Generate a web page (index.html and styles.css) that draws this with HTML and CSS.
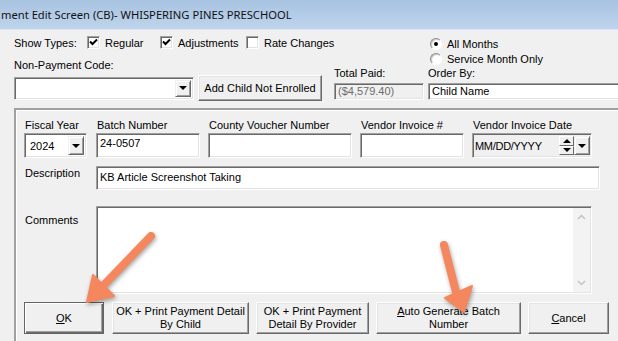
FILE: index.html
```html
<!DOCTYPE html>
<html lang="en">

<head>
    <meta charset="UTF-8">
    <title>Payment Edit Screen</title>
    <link rel="stylesheet" href="styles.css">
</head>

<body>
    <div class="titlebar">ment Edit Screen (CB)- WHISPERING PINES PRESCHOOL</div>

    <div class="top">
        <div class="left">
            <div class="types">
                <span class="types-lbl">Show Types:</span>
                <span class="chk c1"><span class="box"><svg width="9" height="9" viewBox="0 0 9 9"><path d="M1 3.5 L3.5 6 L8 1.5" stroke="#000" stroke-width="2" fill="none"/></svg></span>Regular</span>
                <span class="chk c2"><span class="box"><svg width="9" height="9" viewBox="0 0 9 9"><path d="M1 3.5 L3.5 6 L8 1.5" stroke="#000" stroke-width="2" fill="none"/></svg></span>Adjustments</span>
                <span class="chk"><span class="box"></span>Rate Changes</span>
            </div>
            <div class="lbl np">Non-Payment Code:</div>
            <div class="combo-row">
                <div class="sunken combo np-combo"><span class="drop"><i class="tri"></i></span></div>
                <div class="btn add"><span>Add Child Not Enrolled</span></div>
            </div>
        </div>
        <div class="total">
            <div class="lbl">Total Paid:</div>
            <div class="sunken field disabled">($4,579.40)</div>
        </div>
        <div class="order">
            <div class="radio-row"><span class="radio on"><i></i></span>All Months</div>
            <div class="radio-row"><span class="radio"></span>Service Month Only</div>
            <div class="lbl">Order By:</div>
            <div class="sunken field">Child Name</div>
        </div>
    </div>

    <div class="group">
        <div class="fields">
            <div class="col">
                <div class="lbl">Fiscal Year</div>
                <div class="sunken combo fy">2024<span class="drop"><i class="tri"></i></span></div>
            </div>
            <div class="col">
                <div class="lbl">Batch Number</div>
                <div class="sunken box-in batch">24-0507</div>
            </div>
            <div class="col">
                <div class="lbl">County Voucher Number</div>
                <div class="sunken box-in county"></div>
            </div>
            <div class="col">
                <div class="lbl">Vendor Invoice #</div>
                <div class="sunken box-in vendor"></div>
            </div>
            <div class="col">
                <div class="lbl">Vendor Invoice Date</div>
                <div class="sunken date">
                    <span class="date-txt">MM/DD/YYYY</span>
                    <span class="spin">
                        <span class="spin-btn"><i class="tri up"></i></span>
                        <span class="spin-btn"><i class="tri"></i></span>
                    </span>
                    <span class="drop"><i class="tri"></i></span>
                </div>
            </div>
        </div>

        <div class="line desc-line">
            <div class="side-lbl">Description</div>
            <div class="sunken box-in desc">KB Article Screenshot Taking</div>
        </div>

        <div class="line comm-line">
            <div class="side-lbl comm-lbl">Comments</div>
            <div class="sunken comments">
                <div class="scroll">
                    <svg width="9" height="6" viewBox="0 0 9 6"><path d="M1 5 L4.5 1.5 L8 5" stroke="#c4c4c4" stroke-width="1.5" fill="none"/></svg>
                    <svg width="9" height="6" viewBox="0 0 9 6"><path d="M1 1 L4.5 4.5 L8 1" stroke="#c4c4c4" stroke-width="1.5" fill="none"/></svg>
                </div>
            </div>
        </div>

        <div class="buttons">
            <div class="btn default ok"><span><u>O</u>K</span></div>
            <div class="btn b2"><span>OK + Print Payment Detail<br>By Child</span></div>
            <div class="btn b3"><span>OK + Print Payment<br>Detail By Provider</span></div>
            <div class="btn b4"><span><u>A</u>uto Generate Batch<br>Number</span></div>
            <div class="btn cancel"><span><u>C</u>ancel</span></div>
        </div>
    </div>

    <svg class="arrows" width="618" height="341" viewBox="0 0 618 341">
        <g fill="#f4875e" stroke="#f4875e">
            <line x1="151" y1="236" x2="101" y2="288" stroke-width="8" stroke-linecap="round"/>
            <polygon points="87,302 93,275 114,296" stroke-width="2" stroke-linejoin="round"/>
            <line x1="444" y1="245" x2="456" y2="292" stroke-width="8" stroke-linecap="round"/>
            <polygon points="464,312 445,298 472,286" stroke-width="2" stroke-linejoin="round"/>
        </g>
    </svg>
</body>

</html>
```

FILE: styles.css
```css
* {
    margin: 0;
    padding: 0;
    box-sizing: border-box;
}

body {
    width: 618px;
    height: 341px;
    overflow: hidden;
    background-color: #f0f0f0;
    font-family: "Liberation Sans", Arial, sans-serif;
    font-size: 11px;
    color: #000;
    position: relative;
}

.titlebar {
    height: 30px;
    line-height: 30px;
    padding-left: 1px;
    background: linear-gradient(#a7c3e1, #bfd4ec);
    border-bottom: 1px solid #dce7f3;
    font-family: "Noto Sans", sans-serif;
    font-size: 11.2px;
    color: #111;
    white-space: nowrap;
}

/* 3d borders */
.sunken {
    border: 1px solid;
    border-color: #a0a0a0 #fff #fff #a0a0a0;
    box-shadow: inset 1px 1px 0 #696969, inset -1px -1px 0 #e3e3e3;
    background-color: #fff;
}

.btn {
    background-color: #f0f0f0;
    border: 1px solid;
    border-color: #fff #696969 #696969 #fff;
    box-shadow: inset -1px -1px 0 #a0a0a0, inset 1px 1px 0 #e3e3e3;
    display: flex;
    align-items: center;
    justify-content: center;
    text-align: center;
    line-height: 13px;
}

.btn.default {
    border: 1px solid #646464;
    box-shadow: inset 1px 1px 0 #fff, inset -1px -1px 0 #696969, inset -2px -2px 0 #a0a0a0;
}

.lbl {
    height: 13px;
    line-height: 13px;
    white-space: nowrap;
}

/* top area */
.top {
    display: flex;
    align-items: flex-end;
    padding-left: 14px;
}

.left {
    width: 308px;
}

.types {
    display: flex;
    align-items: center;
    height: 13px;
    margin-top: 6px;
    white-space: nowrap;
    width: 330px;
}

.types-lbl {
    width: 73px;
}

.chk {
    display: flex;
    align-items: center;
}

.chk.c1 {
    width: 73px;
}

.chk.c2 {
    width: 86px;
}

.chk .box {
    width: 13px;
    height: 13px;
    border: 1px solid;
    border-color: #a0a0a0 #fff #fff #a0a0a0;
    box-shadow: inset 1px 1px 0 #696969, inset -1px -1px 0 #e3e3e3;
    background-color: #fff;
    margin-right: 5px;
    display: flex;
    align-items: center;
    justify-content: center;
}

.chk .box svg {
    margin-top: -1px;
}

.np {
    margin-top: 10px;
}

.combo-row {
    display: flex;
    align-items: center;
    margin-top: 3px;
}

.combo {
    position: relative;
    height: 23px;
    display: flex;
    align-items: center;
    padding-left: 4px;
}

.np-combo {
    width: 180px;
}

.drop {
    position: absolute;
    right: 2px;
    top: 2px;
    bottom: 2px;
    width: 16px;
    background-color: #f0f0f0;
    border: 1px solid;
    border-color: #f0f0f0 #696969 #696969 #f0f0f0;
    box-shadow: inset 1px 1px 0 #fff, inset -1px -1px 0 #a0a0a0;
    display: flex;
    align-items: center;
    justify-content: center;
}

.tri {
    width: 0;
    height: 0;
    border-left: 4px solid transparent;
    border-right: 4px solid transparent;
    border-top: 4px solid #000;
}

.tri.up {
    border-top: none;
    border-bottom: 4px solid #000;
}

.add {
    width: 124px;
    height: 26px;
    margin-left: 4px;
}

.total {
    width: 90px;
    margin-left: 12px;
    margin-bottom: 1px;
}

.order {
    flex: 1;
    margin-left: 4px;
    margin-right: -10px;
    margin-bottom: 1px;
}

.field {
    height: 17px;
    margin-top: 3px;
    line-height: 15px;
    padding-left: 3px;
    white-space: nowrap;
}

.field.disabled {
    background-color: #f0f0f0;
    color: #6d6d6d;
}

.radio-row {
    display: flex;
    align-items: center;
    height: 15px;
    padding-left: 2px;
}

.radio-row + .radio-row {
    margin-bottom: 1px;
}

.radio {
    width: 12px;
    height: 12px;
    border-radius: 50%;
    border: 1px solid;
    border-color: #8c8c8c #fff #fff #8c8c8c;
    background-color: #fff;
    box-shadow: inset 1px 1px 1px #c8c8c8;
    margin-right: 5px;
    display: flex;
    align-items: center;
    justify-content: center;
}

.radio i {
    width: 4px;
    height: 4px;
    border-radius: 50%;
    background-color: #000;
}

/* group box */
.group {
    margin: 7px -10px 0 14px;
    border-top: 2px solid;
    border-left: 2px solid;
    border-color: #a0a0a0;
    box-shadow: inset 1px 1px 0 #fff;
    padding: 9px 0 0 8px;
    height: 250px;
}

.fields {
    display: flex;
    gap: 8px;
}

.fields .lbl {
    padding-left: 1px;
    margin-bottom: 1px;
}

.fy {
    width: 63px;
    height: 25px;
    padding-left: 5px;
    margin-right: 1px;
}

.box-in {
    height: 25px;
    padding: 3px 0 0 3px;
    line-height: 13px;
    white-space: nowrap;
}

.batch {
    width: 104px;
}

.county {
    width: 144px;
}

.vendor {
    width: 104px;
}

.date {
    position: relative;
    width: 120px;
    height: 25px;
    background-color: #f0f0f0;
    display: flex;
    align-items: center;
    padding-left: 2px;
}

.date-txt {
    letter-spacing: -0.3px;
}

.spin {
    position: absolute;
    left: 86px;
    top: 2px;
    bottom: 2px;
    width: 15px;
    display: flex;
    flex-direction: column;
}

.spin-btn {
    flex: 1;
    background-color: #f0f0f0;
    border: 1px solid;
    border-color: #fff #696969 #696969 #fff;
    display: flex;
    align-items: center;
    justify-content: center;
}

.date .drop {
    right: 1px;
}

.line {
    display: flex;
}

.side-lbl {
    width: 72px;
    padding: 1px 0 0 1px;
    line-height: 13px;
}

.desc-line {
    margin-top: 8px;
}

.desc {
    width: 504px;
    height: 24px;
    padding-top: 4px;
}

.comm-line {
    margin-top: 16px;
}

.comm-lbl {
    padding-top: 8px;
}

.comments {
    width: 496px;
    height: 88px;
    position: relative;
}

.scroll {
    position: absolute;
    right: 1px;
    top: 1px;
    bottom: 1px;
    width: 17px;
    background-color: #f3f3f3;
    display: flex;
    flex-direction: column;
    justify-content: space-between;
    align-items: center;
    padding: 6px 0 6px;
}

.buttons {
    display: flex;
    gap: 7px;
    margin-top: 8px;
}

.buttons .btn {
    height: 32px;
}

.ok {
    width: 80px;
    margin-right: 1px;
}

.b2 {
    width: 137px;
}

.b3 {
    width: 113px;
}

.b4 {
    width: 145px;
}

.cancel {
    width: 81px;
}

.arrows {
    position: absolute;
    left: 0;
    top: 0;
    pointer-events: none;
    filter: drop-shadow(1px 2px 2px rgba(0, 0, 0, 0.35));
}
```
